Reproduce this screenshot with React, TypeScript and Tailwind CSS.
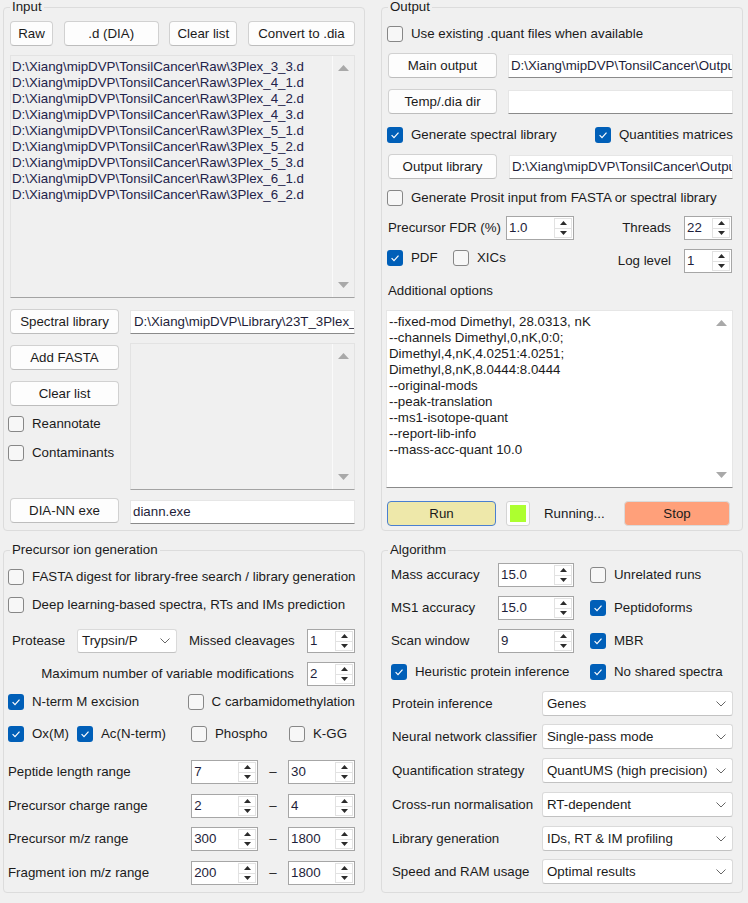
import React from "react";

const files = [
  "3Plex_3_3.d",
  "3Plex_4_1.d",
  "3Plex_4_2.d",
  "3Plex_4_3.d",
  "3Plex_5_1.d",
  "3Plex_5_2.d",
  "3Plex_5_3.d",
  "3Plex_6_1.d",
  "3Plex_6_2.d",
];

const options = [
  "--fixed-mod Dimethyl, 28.0313, nK",
  "--channels Dimethyl,0,nK,0:0;",
  "Dimethyl,4,nK,4.0251:4.0251;",
  "Dimethyl,8,nK,8.0444:8.0444",
  "--original-mods",
  "--peak-translation",
  "--ms1-isotope-quant",
  "--report-lib-info",
  "--mass-acc-quant 10.0",
];

function Btn({
  children,
  className = "",
  tone = "bg-[#fdfdfd] border-[#d1d1d1] border-b-[#bdbdbd]",
}: {
  children?: React.ReactNode;
  className?: string;
  tone?: string;
}) {
  return (
    <button
      type="button"
      className={`h-[25px] shrink-0 flex items-center justify-center rounded-[4px] border ${tone} ${className}`}
    >
      {children}
    </button>
  );
}

function Box({ on }: { on?: boolean }) {
  if (on) {
    return (
      <span className="w-[16px] h-[16px] shrink-0 rounded-[3px] bg-[#005fb8] flex items-center justify-center">
        <svg width="12" height="12" viewBox="0 0 12 12">
          <path d="M2.6 6.2 L5 8.6 L9.5 3.7" fill="none" stroke="#ffffff" strokeWidth="1.2" />
        </svg>
      </span>
    );
  }
  return <span className="w-[16px] h-[16px] shrink-0 rounded-[3px] border border-[#878787] bg-[#f7f7f7]" />;
}

function CheckItem({ on, label, className = "" }: { on?: boolean; label: string; className?: string }) {
  return (
    <div className={`flex items-center gap-[8px] h-[16px] whitespace-nowrap ${className}`}>
      <Box on={on} />
      <span>{label}</span>
    </div>
  );
}

function TextBox({ children, className = "" }: { children?: React.ReactNode; className?: string }) {
  return (
    <div
      className={`h-[24px] bg-white border border-[#e6e6e6] border-b-[#8a8a8a] pl-[2px] flex items-center overflow-hidden whitespace-nowrap text-[#1e1e3a] ${className}`}
    >
      {children}
    </div>
  );
}

function Arrow({ up, color }: { up?: boolean; color: string }) {
  return (
    <svg width="7" height="4" viewBox="0 0 7 4">
      <path d={up ? "M0 4 L3.5 0 L7 4 Z" : "M0 0 L3.5 4 L7 0 Z"} fill={color} />
    </svg>
  );
}

function Spin({ value, className = "" }: { value: string; className?: string }) {
  return (
    <div className={`h-[24px] shrink-0 flex bg-white border border-[#a6a6a6] ${className}`}>
      <div className="flex-1 pl-[2px] flex items-center text-[#1e1e3a]">{value}</div>
      <div className="w-[18px] my-[1px] mr-[1px] flex flex-col border border-[#e2e2e2]">
        <div className="flex-1 flex items-center justify-center border-b border-[#e2e2e2]">
          <Arrow up color="#2b2b2b" />
        </div>
        <div className="flex-1 flex items-center justify-center">
          <Arrow color="#2b2b2b" />
        </div>
      </div>
    </div>
  );
}

function Combo({ value, className = "" }: { value: string; className?: string }) {
  return (
    <div
      className={`shrink-0 flex items-center justify-between bg-white border border-[#dadada] border-b-[#c2c2c2] rounded-[3px] pl-[4px] pr-[6px] ${className}`}
    >
      <span className="whitespace-nowrap">{value}</span>
      <svg width="10" height="6" viewBox="0 0 10 6">
        <path d="M0.5 0.5 L5 5 L9.5 0.5" fill="none" stroke="#666666" strokeWidth="1" />
      </svg>
    </div>
  );
}

function ScrollBar({ line = "border-[#fafafa]" }: { line?: string }) {
  return (
    <div className={`w-[22px] shrink-0 border-l ${line} flex flex-col justify-between items-center py-[9px]`}>
      <svg width="11" height="6" viewBox="0 0 11 6">
        <path d="M0 6 L5.5 0 L11 6 Z" fill="#a9a9a9" />
      </svg>
      <svg width="11" height="6" viewBox="0 0 11 6">
        <path d="M0 0 L5.5 6 L11 0 Z" fill="#a9a9a9" />
      </svg>
    </div>
  );
}

function Group({ title, children, className = "" }: { title: string; children: React.ReactNode; className?: string }) {
  return (
    <fieldset className={`min-w-0 border border-[#dcdcdc] rounded-[4px] pl-[6px] pr-[9px] ${className}`}>
      <legend className="px-[2px] leading-[14px]">{title}</legend>
      {children}
    </fieldset>
  );
}

function RangeRow({ label, a, b, className = "" }: { label: string; a: string; b: string; className?: string }) {
  return (
    <div className={`flex items-center h-[24px] ${className}`}>
      <span className="w-[184px] -ml-[2px]">{label}</span>
      <Spin className="w-[67px]" value={a} />
      <span className="w-[30px] text-center">–</span>
      <Spin className="w-[67px]" value={b} />
    </div>
  );
}

function AlgoCombo({ label, value, className = "" }: { label: string; value: string; className?: string }) {
  return (
    <div className={`flex items-center ${className}`}>
      <span className="w-[156px] pl-[4px] whitespace-nowrap">{label}</span>
      <Combo className="w-[191px] h-[25px]" value={value} />
    </div>
  );
}

function AlgoSpin({
  label,
  value,
  check,
  on,
  className = "",
}: {
  label: string;
  value: string;
  check: string;
  on?: boolean;
  className?: string;
}) {
  return (
    <div className={`flex items-center h-[24px] ${className}`}>
      <span className="w-[110px] pl-[3px]">{label}</span>
      <Spin className="w-[76px]" value={value} />
      <CheckItem className="ml-[16px]" on={on} label={check} />
    </div>
  );
}

export default function App() {
  return (
    <div className="w-[748px] h-[903px] bg-[#f0f0f0] text-[#1b1b1b] text-[13.3px] leading-[16px] font-['Liberation_Sans',Arial,sans-serif] pl-[3px] grid grid-cols-[362px_362px] grid-rows-[531px_350px] gap-x-[16px] gap-y-[12px]">
      {/* Input */}
      <Group title="Input">
        <div className="mt-[7px] flex justify-between">
          <Btn className="w-[43px]">Raw</Btn>
          <Btn className="w-[95px]">.d (DIA)</Btn>
          <Btn className="w-[68px]">Clear list</Btn>
          <Btn className="w-[107px]">Convert to .dia</Btn>
        </div>
        <div className="mt-[9px] h-[243px] flex bg-[#f0f0f0] border border-[#e3e3e3] border-b-[#a3a3a3]">
          <div className="flex-1 pt-[3px] pl-[1px] text-[#23234a] whitespace-nowrap overflow-hidden">
            {files.map((f) => (
              <div key={f}>{"D:\\Xiang\\mipDVP\\TonsilCancer\\Raw\\" + f}</div>
            ))}
          </div>
          <ScrollBar />
        </div>
        <div className="mt-[11px] flex items-start justify-between">
          <Btn className="w-[109px]">Spectral library</Btn>
          <TextBox className="w-[225px] mt-[1px] pl-[3px]">
            {"D:\\Xiang\\mipDVP\\Library\\23T_3Plex_dimethyl.predicted.speclib"}
          </TextBox>
        </div>
        <div className="mt-[9px] flex justify-between">
          <div className="w-[109px] flex flex-col">
            <Btn className="mt-[2px]">Add FASTA</Btn>
            <Btn className="mt-[11px]">Clear list</Btn>
            <CheckItem className="mt-[10px] -ml-[2px]" label="Reannotate" />
            <CheckItem className="mt-[13px] -ml-[2px]" label="Contaminants" />
          </div>
          <div className="w-[225px] h-[147px] flex bg-[#f0f0f0] border border-[#e3e3e3] border-b-[#a3a3a3]">
            <div className="flex-1" />
            <ScrollBar />
          </div>
        </div>
        <div className="mt-[8px] flex items-start justify-between">
          <Btn className="w-[109px]">DIA-NN exe</Btn>
          <TextBox className="w-[225px] mt-[2px] h-[23px]">diann.exe</TextBox>
        </div>
      </Group>

      {/* Output */}
      <Group title="Output">
        <CheckItem className="mt-[12px] -ml-[1px]" label="Use existing .quant files when available" />
        <div className="mt-[11px] flex items-start">
          <Btn className="w-[109px]">Main output</Btn>
          <TextBox className="ml-[11px] w-[225px] mt-[1px]">
            {"D:\\Xiang\\mipDVP\\TonsilCancer\\Output\\report.parquet"}
          </TextBox>
        </div>
        <div className="mt-[11px] flex items-start">
          <Btn className="w-[109px]">Temp/.dia dir</Btn>
          <TextBox className="ml-[11px] w-[225px] mt-[1px]" />
        </div>
        <div className="mt-[13px] flex">
          <CheckItem on className="w-[208px] -ml-[1px]" label="Generate spectral library" />
          <CheckItem on label="Quantities matrices" />
        </div>
        <div className="mt-[11px] flex items-start">
          <Btn className="w-[109px]">Output library</Btn>
          <TextBox className="ml-[12px] w-[224px] mt-[1px]">
            {"D:\\Xiang\\mipDVP\\TonsilCancer\\Output\\report-lib.parquet"}
          </TextBox>
        </div>
        <CheckItem className="mt-[11px] -ml-[1px]" label="Generate Prosit input from FASTA or spectral library" />
        <div className="mt-[10px] flex items-center h-[24px]">
          <span className="w-[118px] whitespace-nowrap">Precursor FDR (%)</span>
          <Spin className="w-[68px]" value="1.0" />
          <span className="w-[110px] text-right pr-[13px]">Threads</span>
          <Spin className="w-[48px]" value="22" />
        </div>
        <div className="mt-[9px] flex items-start h-[24px]">
          <CheckItem on className="mt-[1px] -ml-[1px] w-[66px]" label="PDF" />
          <CheckItem className="mt-[1px] w-[121px]" label="XICs" />
          <span className="w-[110px] h-[24px] flex items-center justify-end pr-[13px]">Log level</span>
          <Spin className="w-[48px]" value="1" />
        </div>
        <div className="mt-[10px]">Additional options</div>
        <div className="mt-[11px] -ml-[2px] w-[347px] h-[178px] flex bg-white border border-[#e6e6e6] border-b-[#8a8a8a]">
          <div className="flex-1 pt-[3px] pl-[2px] whitespace-nowrap overflow-hidden">
            {options.map((o) => (
              <div key={o}>{o}</div>
            ))}
          </div>
          <ScrollBar line="border-white" />
        </div>
        <div className="mt-[13px] flex items-center">
          <Btn className="w-[109px] -ml-[1px]" tone="bg-[#eee8aa] border-[#4a7fd0]">
            Run
          </Btn>
          <div className="ml-[10px] w-[24px] h-[25px] rounded-[3px] border border-[#d4d4d4] bg-[#fdfdfd] p-[3px]">
            <div className="w-full h-full bg-[#adff2f]" />
          </div>
          <span className="ml-[14px]">Running...</span>
          <Btn className="ml-auto mr-[3px] w-[106px]" tone="bg-[#ffa07a] border-[#dadada]">
            Stop
          </Btn>
        </div>
      </Group>

      {/* Precursor ion generation */}
      <Group title="Precursor ion generation">
        <CheckItem className="mt-[12px] -ml-[2px]" label="FASTA digest for library-free search / library generation" />
        <CheckItem className="mt-[12px] -ml-[2px]" label="Deep learning-based spectra, RTs and IMs prediction" />
        <div className="mt-[16px] flex items-center h-[24px]">
          <span className="ml-[2px] w-[65px]">Protease</span>
          <Combo className="w-[100px] h-[24px]" value="Trypsin/P" />
          <span className="ml-[12px] w-[118px] whitespace-nowrap">Missed cleavages</span>
          <Spin className="w-[48px]" value="1" />
        </div>
        <div className="mt-[9px] flex items-center h-[24px]">
          <span className="w-[297px] text-right pr-[13px] whitespace-nowrap">Maximum number of variable modifications</span>
          <Spin className="w-[48px]" value="2" />
        </div>
        <div className="mt-[8px] flex">
          <CheckItem on className="w-[184px] -ml-[2px]" label="N-term M excision" />
          <CheckItem label="C carbamidomethylation" />
        </div>
        <div className="mt-[16px] flex">
          <CheckItem on className="w-[69px] -ml-[2px]" label="Ox(M)" />
          <CheckItem on className="w-[114px]" label="Ac(N-term)" />
          <CheckItem className="w-[98px]" label="Phospho" />
          <CheckItem label="K-GG" />
        </div>
        <RangeRow className="mt-[18px]" label="Peptide length range" a="7" b="30" />
        <RangeRow className="mt-[10px]" label="Precursor charge range" a="2" b="4" />
        <RangeRow className="mt-[9px]" label="Precursor m/z range" a="300" b="1800" />
        <RangeRow className="mt-[10px]" label="Fragment ion m/z range" a="200" b="1800" />
      </Group>

      {/* Algorithm */}
      <Group title="Algorithm">
        <AlgoSpin className="mt-[6px]" label="Mass accuracy" value="15.0" check="Unrelated runs" />
        <AlgoSpin className="mt-[9px]" label="MS1 accuracy" value="15.0" check="Peptidoforms" on />
        <AlgoSpin className="mt-[9px]" label="Scan window" value="9" check="MBR" on />
        <div className="mt-[11px] flex">
          <CheckItem on className="ml-[3px] w-[199px]" label="Heuristic protein inference" />
          <CheckItem on label="No shared spectra" />
        </div>
        <AlgoCombo className="mt-[11px]" label="Protein inference" value="Genes" />
        <AlgoCombo className="mt-[8px]" label="Neural network classifier" value="Single-pass mode" />
        <AlgoCombo className="mt-[9px]" label="Quantification strategy" value="QuantUMS (high precision)" />
        <AlgoCombo className="mt-[9px]" label="Cross-run normalisation" value="RT-dependent" />
        <AlgoCombo className="mt-[9px]" label="Library generation" value="IDs, RT & IM profiling" />
        <AlgoCombo className="mt-[8px]" label="Speed and RAM usage" value="Optimal results" />
      </Group>
    </div>
  );
}
